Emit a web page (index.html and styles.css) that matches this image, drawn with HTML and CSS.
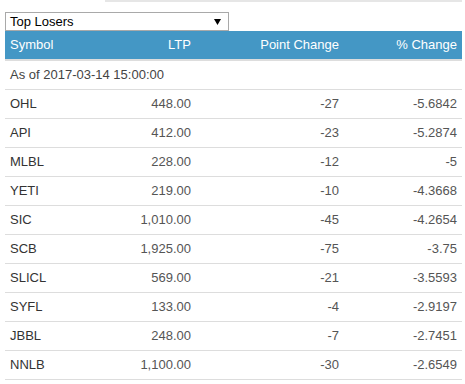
FILE: index.html
```html
<!DOCTYPE html>
<html>
<head>
<meta charset="utf-8">
<link rel="stylesheet" href="styles.css">
</head>
<body>
<div class="page">
  <div class="tabbar"><div class="tab-active"></div><div class="tab-rest"></div></div>
  <div class="select">
    <span class="select-text">Top Losers</span>
    <svg class="select-arrow" width="7" height="6" viewBox="0 0 7 6"><path d="M0 0H7L3.5 6Z" fill="#000"/></svg>
  </div>
  <table class="losers">
    <colgroup>
      <col class="c1"><col class="c2"><col class="c3"><col class="c4">
    </colgroup>
    <thead>
      <tr><th class="l">Symbol</th><th>LTP</th><th>Point Change</th><th>% Change</th></tr>
    </thead>
    <tbody>
      <tr class="asof"><td colspan="4">As of 2017-03-14 15:00:00</td></tr>
      <tr><td class="sym">OHL</td><td>448.00</td><td>-27</td><td>-5.6842</td></tr>
      <tr><td class="sym">API</td><td>412.00</td><td>-23</td><td>-5.2874</td></tr>
      <tr><td class="sym">MLBL</td><td>228.00</td><td>-12</td><td>-5</td></tr>
      <tr><td class="sym">YETI</td><td>219.00</td><td>-10</td><td>-4.3668</td></tr>
      <tr><td class="sym">SIC</td><td>1,010.00</td><td>-45</td><td>-4.2654</td></tr>
      <tr><td class="sym">SCB</td><td>1,925.00</td><td>-75</td><td>-3.75</td></tr>
      <tr><td class="sym">SLICL</td><td>569.00</td><td>-21</td><td>-3.5593</td></tr>
      <tr><td class="sym">SYFL</td><td>133.00</td><td>-4</td><td>-2.9197</td></tr>
      <tr><td class="sym">JBBL</td><td>248.00</td><td>-7</td><td>-2.7451</td></tr>
      <tr><td class="sym">NNLB</td><td>1,100.00</td><td>-30</td><td>-2.6549</td></tr>
    </tbody>
  </table>
</div>
</body>
</html>
```

FILE: styles.css
```css
html, body {
  margin: 0;
  padding: 0;
  background: #fff;
}
body {
  font-family: "Liberation Sans", Arial, sans-serif;
  font-size: 13px;
  color: #555;
}
.page {
  width: 457px;
  padding: 0 3px 0 5px;
}
.tabbar {
  display: flex;
  height: 2px;
}
.tab-active {
  width: 100px;
}
.tab-rest {
  flex: 1;
  background: #e6e6e6;
}
.select {
  margin-top: 10px;
  width: 222px;
  height: 17px;
  border: 1px solid #a9a9a9;
  display: flex;
  align-items: center;
  justify-content: space-between;
  padding: 0 7px 0 0;
  box-sizing: content-box;
  width: 215px;
}
.select-text {
  color: #000;
  padding-left: 4px;
  line-height: 17px;
}
.select-arrow {
  display: block;
}
.losers {
  width: 457px;
  border-collapse: collapse;
  table-layout: fixed;
}
.c1 { width: 100px; }
.c2 { width: 91px; }
.c3 { width: 148px; }
.c4 { width: 118px; }
.losers th, .losers td {
  padding: 5px;
  line-height: 18px;
  text-align: right;
  font-weight: normal;
  white-space: nowrap;
}
.losers th {
  background: #4497c5;
  color: #fff;
  border-bottom: 2px solid #dddddd;
}
.losers th.l {
  text-align: left;
}
.losers tbody td {
  border-top: 1px solid #dddddd;
}
.losers tbody tr:last-child td {
  border-bottom: 1px solid #dddddd;
}
.losers tbody tr.asof td {
  border-top: 0;
  text-align: left;
  color: #444;
}
.losers td.sym {
  text-align: left;
  color: #333;
}
```
